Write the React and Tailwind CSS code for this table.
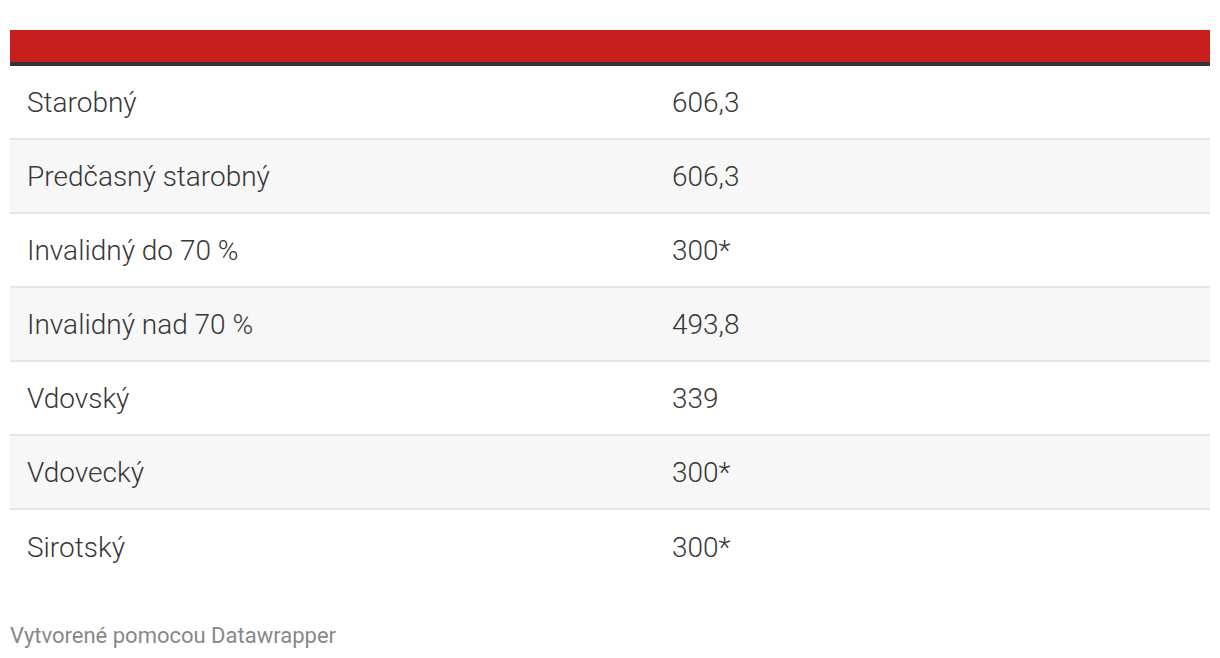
import React from 'react';

const rows = [
  ['Starobný', '606,3'],
  ['Predčasný starobný', '606,3'],
  ['Invalidný do 70 %', '300*'],
  ['Invalidný nad 70 %', '493,8'],
  ['Vdovský', '339'],
  ['Vdovecký', '300*'],
  ['Sirotský', '300*'],
];

export default function App() {
  return (
    <div className="w-[1220px] h-[658px] bg-white px-[10px] pt-[30px] font-['Roboto_Light','Roboto',sans-serif]">
      <div className="h-[32px] bg-[#c71e1e]" />
      <div className="h-[4px] bg-[#333333]" />
      {rows.map(([label, value], i) => (
        <div
          key={label}
          className={
            'flex items-center h-[74px] pt-[1px] text-[28px] font-light text-[#383838] ' +
            (i % 2 === 1 ? 'bg-[#f7f7f7] ' : 'bg-white ') +
            (i < rows.length - 1 ? 'border-b-2 border-[#e6e6e6]' : 'h-[72px]')
          }
        >
          <div className="w-[645px] pl-[17px]">{label}</div>
          <div className="pl-[17px]">{value}</div>
        </div>
      ))}
      <div className="mt-[39px] text-[22px] leading-[26px] text-[#888888] font-['Roboto',sans-serif]">Vytvorené pomocou Datawrapper</div>
    </div>
  );
}
